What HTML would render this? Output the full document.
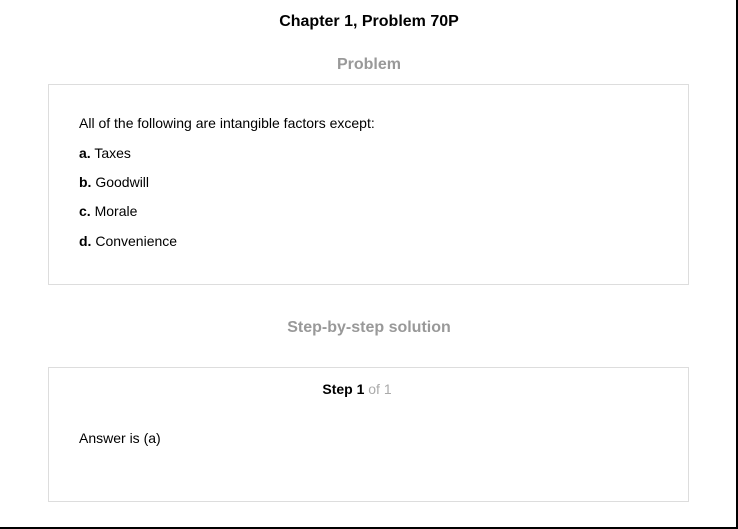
<!DOCTYPE html>
<html><head><style>
html,body{margin:0;padding:0;background:#fff;}
body{width:738px;height:529px;position:relative;overflow:hidden;font-family:"Liberation Sans",Arial,sans-serif;color:#000;}
.frame{position:absolute;left:0;top:0;width:736px;height:527px;border-right:2px solid #000;border-bottom:2px solid #000;}
.t{position:absolute;left:0;width:738px;text-align:center;font-weight:bold;}
.box{position:absolute;left:48px;width:639px;border:1px solid #ddd;}
.l{position:absolute;left:79px;font-size:14px;line-height:16px;}
</style></head><body>
<div class="frame"></div>
<div class="t" style="top:13px;font-size:16px;line-height:18px;">Chapter 1, Problem 70P</div>
<div class="t" style="top:56px;font-size:16px;line-height:18px;color:#999;">Problem</div>
<div class="box" style="top:84px;height:199px;"></div>
<div class="l" style="top:115px;">All of the following are intangible factors except:</div>
<div class="l" style="top:145px;"><b>a.</b> Taxes</div>
<div class="l" style="top:174px;"><b>b.</b> Goodwill</div>
<div class="l" style="top:203px;"><b>c.</b> Morale</div>
<div class="l" style="top:233px;"><b>d.</b> Convenience</div>
<div class="t" style="top:319px;font-size:16px;line-height:18px;color:#999;">Step-by-step solution</div>
<div class="box" style="top:367px;height:133px;"></div>
<div class="t" style="top:381px;left:-12px;font-size:14px;line-height:16px;">Step 1 <span style="font-weight:normal;color:#aaa;">of 1</span></div>
<div class="l" style="top:430px;">Answer is (a)</div>
</body></html>
